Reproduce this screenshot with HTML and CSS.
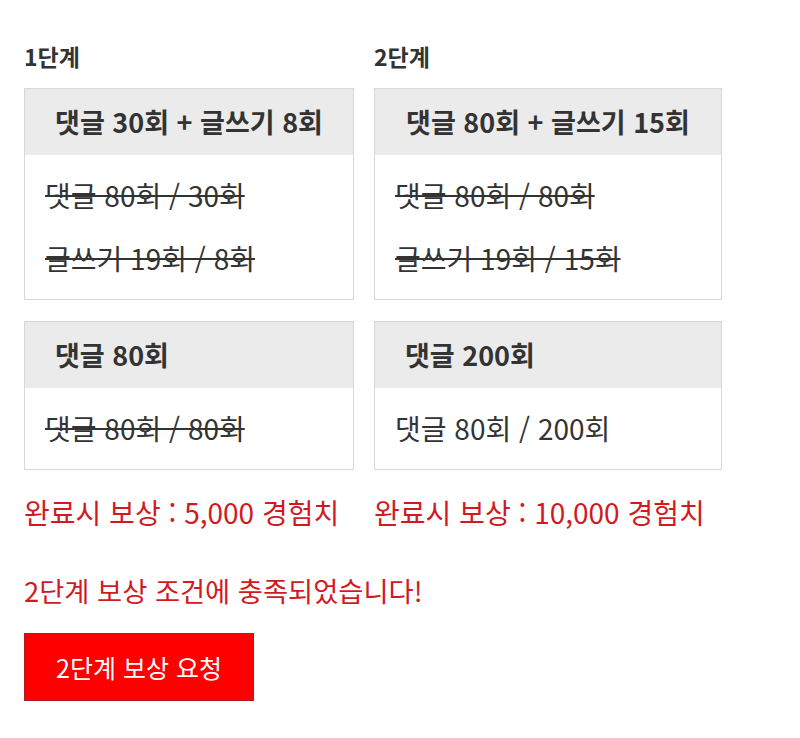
FILE: index.html
```html
<!DOCTYPE html>
<html lang="ko">
<head>
    <meta charset="utf-8">
    <title>단계별 보상</title>
    <link rel="stylesheet" href="styles.css">
</head>
<body>
    <div class="mission">
        <div class="stages">
            <h3 class="stage-title">1단계</h3>
            <h3 class="stage-title">2단계</h3>

            <div class="task-box">
                <div class="task-head center">댓글 30회 + 글쓰기 8회</div>
                <div class="task-body">
                    <p class="done">댓글 80회 / 30회</p>
                    <p class="done">글쓰기 19회 / 8회</p>
                </div>
            </div>
            <div class="task-box">
                <div class="task-head center">댓글 80회 + 글쓰기 15회</div>
                <div class="task-body">
                    <p class="done">댓글 80회 / 80회</p>
                    <p class="done">글쓰기 19회 / 15회</p>
                </div>
            </div>

            <div class="task-box second">
                <div class="task-head">댓글 80회</div>
                <div class="task-body">
                    <p class="done">댓글 80회 / 80회</p>
                </div>
            </div>
            <div class="task-box second">
                <div class="task-head">댓글 200회</div>
                <div class="task-body">
                    <p>댓글 80회 / 200회</p>
                </div>
            </div>

            <p class="reward">완료시 보상 : 5,000 경험치</p>
            <p class="reward">완료시 보상 : 10,000 경험치</p>
        </div>

        <p class="notice">2단계 보상 조건에 충족되었습니다!</p>
        <button type="button" class="request-btn">2단계 보상 요청</button>
    </div>
</body>
</html>
```

FILE: styles.css
```css
body {
    margin: 0;
    background-color: #fff;
    font-family: "Noto Sans CJK KR", "Noto Sans", sans-serif;
    color: #333;
}
.mission {
    padding: 41px 24px 24px;
}
.stages {
    display: grid;
    grid-template-columns: 330px 348px;
    column-gap: 20px;
}
.stage-title {
    margin: 0;
    font-size: 23px;
    line-height: 30px;
    font-weight: bold;
    color: #333;
}
.task-box {
    margin-top: 17px;
    border: 1px solid #d8d8d8;
    background-color: #fff;
}
.task-box.second {
    margin-top: 21px;
}
.task-head {
    padding: 15px 30px;
    background-color: #ebebeb;
    font-size: 27px;
    line-height: 36px;
    font-weight: bold;
    white-space: nowrap;
}
.task-head.center {
    text-align: center;
}
.task-body {
    display: flex;
    flex-direction: column;
    gap: 27px;
    padding: 22px 20px 23px;
}
.task-body p {
    margin: 0;
    font-size: 28px;
    line-height: 36px;
    white-space: nowrap;
}
.task-body p.done {
    text-decoration: line-through;
    text-decoration-thickness: 2px;
}
.reward {
    margin: 24px 0 0;
    font-size: 28px;
    line-height: 36px;
    color: #d11a1f;
    white-space: nowrap;
}
.notice {
    margin: 42px 0 0;
    font-size: 27.3px;
    line-height: 36px;
    color: #d11a1f;
}
.request-btn {
    margin-top: 25px;
    width: 230px;
    height: 68px;
    padding: 0;
    background-color: #ff0000;
    color: #fff;
    border: 1px solid #b51a1c;
    font-family: inherit;
    font-size: 25px;
    cursor: pointer;
}
```
